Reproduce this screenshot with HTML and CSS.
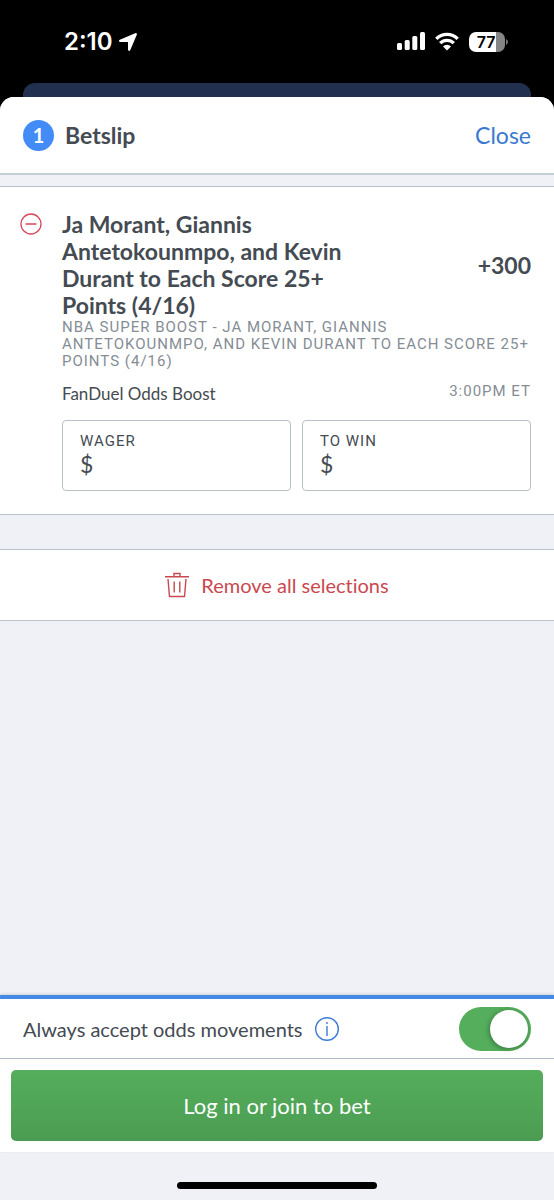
FILE: index.html
```html
<!DOCTYPE html>
<html lang="en">
<head>
<meta charset="utf-8">
<meta name="viewport" content="width=device-width, initial-scale=1">
<title>Betslip</title>
<link rel="stylesheet" href="styles.css">
</head>
<body>
<div class="screen">
  <div class="status">
    <div class="status-left">
      <span class="time">2:10</span>
      <svg width="20" height="20" viewBox="0 0 20 20" aria-hidden="true"><path d="M17.200 1.200 1.800 7.800C.5 8.400.8 10 2.200 10H9.500Q10 10 10 10.500V17.600C10 19.200 11.700 19.500 12.300 18.100L18.800 2.800C19.300 1.500 18.400.7 17.200 1.200Z" fill="#fff"/></svg>
    </div>
    <div class="status-right">
      <svg width="28" height="20" viewBox="0 0 28 20" fill="#fff" aria-hidden="true"><rect y="11" width="5" height="7" rx="1.500"/><rect x="7.700" y="8" width="5" height="10" rx="1.500"/><rect x="15.300" y="4" width="5" height="14" rx="1.500"/><rect x="23" y="0" width="5" height="18" rx="1.500"/></svg>
      <svg width="24" height="20" viewBox="0 0 24 20" aria-hidden="true"><g fill="none" stroke="#fff" stroke-width="3.300"><path d="M1.300 6.800A15.200 15.200 0 0 1 22.700 6.800"/><path d="M5.200 11.200A9.500 9.500 0 0 1 18.800 11.200"/></g><path d="M12 18.500 8 14.500A5.700 5.700 0 0 1 16 14.500Z" fill="#fff"/></svg>
      <div class="battery"><span class="battery-level">77</span><svg width="2" height="6" viewBox="0 0 2 6" aria-hidden="true"><path d="M0 0Q2 1 2 3T0 6Z" fill="#777"/></svg></div>
    </div>
  </div>
  <div class="behind"></div>
  <main class="sheet">
    <header class="header">
      <span class="count">1</span>
      <h1 class="heading">Betslip</h1>
      <button class="close" type="button">Close</button>
    </header>
    <section class="bet">
      <button class="remove" type="button" aria-label="Remove selection">
        <svg width="22" height="22" viewBox="0 0 22 22" fill="none" stroke="#d9475a" stroke-width="1.300" aria-hidden="true"><circle cx="11" cy="11" r="10"/><path d="M5.500 11H16.500"/></svg>
      </button>
      <div class="details">
        <div class="title-row">
          <h2 class="title">Ja Morant, Giannis Antetokounmpo, and Kevin Durant to Each Score 25+ Points (4/16)</h2>
          <span class="odds">+300</span>
        </div>
        <p class="event">NBA SUPER BOOST - JA MORANT, GIANNIS ANTETOKOUNMPO, AND KEVIN DURANT TO EACH SCORE 25+ POINTS (4/16)</p>
        <div class="market"><span>FanDuel Odds Boost</span><time class="start">3:00PM ET</time></div>
        <div class="fields">
          <div class="field"><label for="wager">WAGER</label><input id="wager" type="text" inputmode="decimal" value="$"></div>
          <div class="field"><label for="win">TO WIN</label><input id="win" type="text" inputmode="decimal" value="$"></div>
        </div>
      </div>
    </section>
    <button class="remove-all" type="button">
      <svg width="24" height="26" viewBox="0 0 24 26" fill="none" stroke="#c9494e" stroke-width="1.400" aria-hidden="true"><path d="M0 4.700H24M9 4.500V1.500H15V4.500M3 7 4.500 24.500H19.500L21 7M9.200 9.500V20.500M14.800 9.500V20.500"/></svg>
      <span>Remove all selections</span>
    </button>
    <footer class="footer">
      <div class="accept">
        <label for="accept">Always accept odds movements</label>
        <button class="info" type="button" aria-label="About odds movements">
          <svg width="24" height="24" viewBox="0 0 24 24" fill="none" stroke="#3b7bd6" stroke-width="1.400" aria-hidden="true"><circle cx="12" cy="12" r="11.300"/><path d="M12 9V19M12 5V7"/></svg>
        </button>
        <input class="toggle" id="accept" type="checkbox" role="switch" checked>
      </div>
      <div class="action"><button class="login" type="button">Log in or join to bet</button></div>
    </footer>
    <div class="home"><span class="home-bar"></span></div>
  </main>
</div>
</body>
</html>
```
FILE: styles.css
```css
* { box-sizing: border-box; }
body { margin: 0; background: #000; color: #444b52; font-family: Lato, "Open Sans", sans-serif; font-variant-ligatures: none; }
button { padding: 0; border: 0; background: none; font: inherit; font-variant-ligatures: none; cursor: pointer; }
h1, h2, p { margin: 0; }
svg { display: block; flex: none; }
.screen { min-height: 100vh; display: flex; flex-direction: column; }
.status { height: 83px; padding: 0 46px 0 64px; display: flex; align-items: center; justify-content: space-between; color: #fff; }
.status-left { display: flex; align-items: center; gap: 5px; }
.time { font: 600 24px/28px Inter, sans-serif; }
.status-right { display: flex; align-items: center; gap: 10px; }
.battery { display: flex; align-items: center; gap: 1px; }
.battery-level { width: 36px; height: 20px; padding-right: 2px; border-radius: 7px; background: linear-gradient(90deg, #fff 76%, #858585 76%); color: #000; font: 600 16px/20px Inter, sans-serif; text-align: center; }
.behind { height: 14px; margin: 0 23px; border-radius: 12px 12px 0 0; background: #22304f; }
.sheet { flex: 1; display: flex; flex-direction: column; border-radius: 14px 14px 0 0; background: #f0f1f7; overflow: hidden; }
.header { height: 78px; padding: 0 23px; display: flex; align-items: center; gap: 11px; background: #fff; border-bottom: 2px solid #c6ced6; }
.count { width: 31px; height: 31px; border-radius: 50%; background: #438cf8; color: #fff; font-size: 20px; font-weight: 700; line-height: 30px; text-align: center; }
.heading { font-size: 23px; line-height: 28px; font-weight: 700; }
.close { margin-left: auto; color: #3a79d0; font-size: 23px; line-height: 28px; }
.bet { margin-top: 11px; padding: 24px 23px 23px 20px; display: flex; align-items: flex-start; gap: 20px; background: #fff; border-top: 1px solid #bcc3cb; border-bottom: 1px solid #bcc3cb; }
.remove { padding: 2px 0; }
.details { flex: 1; min-width: 0; }
.title-row { display: flex; justify-content: space-between; }
.title { max-width: 300px; font-size: 23px; line-height: 27px; font-weight: 700; }
.odds { padding-top: 40px; font-size: 23px; line-height: 28px; font-weight: 700; }
.event, .start, .field label { font-family: "Liberation Sans Narrow", Roboto, sans-serif; font-size: 15px; line-height: 17px; letter-spacing: 1px; }
.event { color: #858d95; }
.market { margin-top: 12px; display: flex; justify-content: space-between; font-size: 17px; line-height: 24px; }
.start { color: #858d95; padding-top: 1px; }
.fields { margin-top: 14px; display: grid; grid-template-columns: 1fr 1fr; gap: 11px; }
.field { height: 71px; padding: 12px 17px; display: flex; flex-direction: column; border: 1px solid #b9c0c8; border-radius: 4px; }
.field input { width: 100%; height: 28px; padding: 0; border: 0; background: none; color: inherit; font: 23px/28px Lato, sans-serif; outline: 0; }
.remove-all { height: 72px; margin-top: 34px; display: flex; align-items: center; justify-content: center; gap: 12px; background: #fff; border-top: 1px solid #bcc3cb; border-bottom: 1px solid #bcc3cb; color: #c9494e; font-size: 20px; }
.footer { margin-top: auto; background: #fff; border-top: 4px solid #438ae6; box-shadow: 0 -1px 3px #0002; }
.accept { height: 60px; padding: 0 23px; display: flex; align-items: center; gap: 12px; border-bottom: 1px solid #b0bac4; font-size: 20px; }
.toggle { appearance: none; width: 72px; height: 44px; margin: 0 0 0 auto; padding: 3px; border-radius: 22px; background: #54ae5c; display: flex; justify-content: flex-end; cursor: pointer; }
.toggle::before { content: ""; width: 38px; height: 38px; border-radius: 50%; background: #fff; box-shadow: -1px 1px 5px #0005; }
.toggle:not(:checked) { justify-content: flex-start; background: #b9c0c8; }
.action { padding: 11px; }
.login { width: 100%; height: 71px; border-radius: 5px; background: linear-gradient(#55ae5c, #4b9c52); color: #fff; font-size: 22px; }
.home { height: 48px; display: flex; justify-content: center; align-items: flex-end; padding-bottom: 11px; }
.home-bar { width: 36%; height: 7px; border-radius: 4px; background: #000; }
```
